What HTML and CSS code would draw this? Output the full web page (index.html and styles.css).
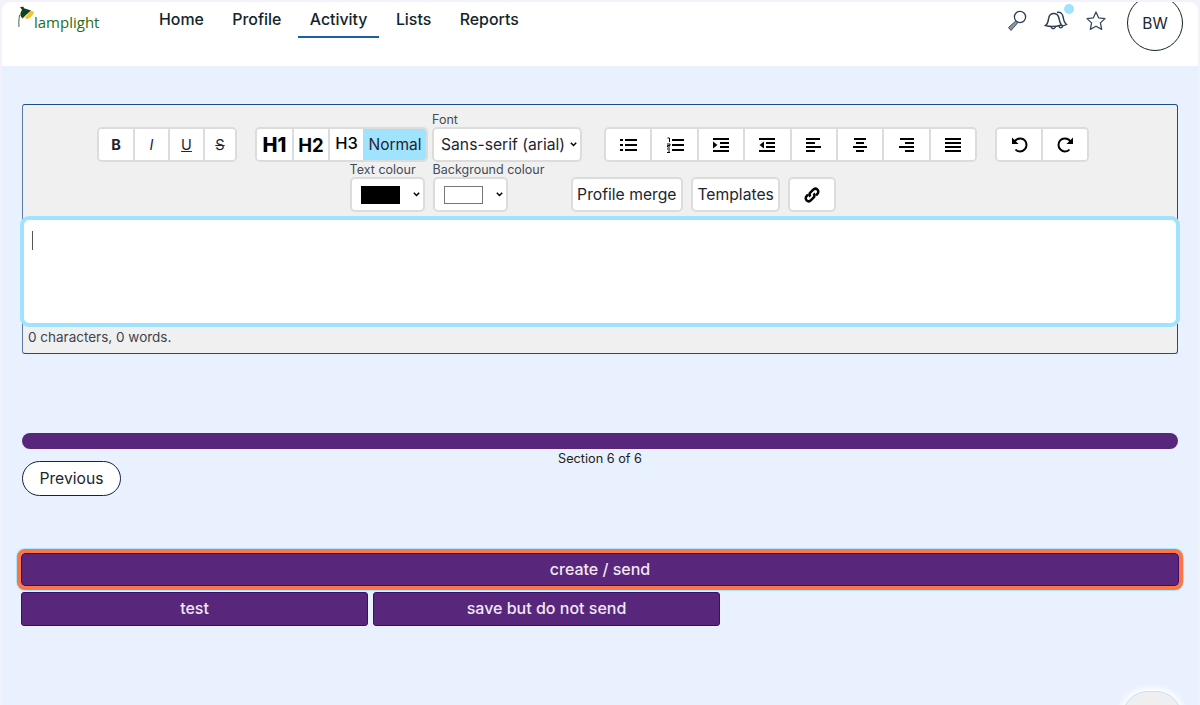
FILE: index.html
```html
<!DOCTYPE html>
<html lang="en">
<head>
<meta charset="utf-8">
<title>Lamplight</title>
<link rel="stylesheet" href="styles.css">
</head>
<body>
<div class="page">
  <header class="header">
    <a class="logo" href="#">
      <svg class="lamp" width="18" height="24" viewBox="0 0 18 24">
        <path d="M2.600 10 C1.800 14 1.700 18 2 22" fill="none" stroke="#4d6a48" stroke-width="1"/>
        <path d="M3 2 L6.500 1.800 L7 3.200 L14 5.500 L9 10 L5.500 13.500 C4 12 3 10.500 3.500 8 L5 4.800 Z" fill="#14401c"/>
        <path d="M14 5.500 L17 6.800 C16.500 10 13.500 13 10.500 14 L7.500 13 L11 9 Z" fill="#f5c22e"/>
      </svg>
      <span class="logo-text">lamplight</span>
    </a>
    <nav class="nav">
      <a class="nav-link" href="#">Home</a>
      <a class="nav-link" href="#">Profile</a>
      <a class="nav-link active" href="#">Activity</a>
      <a class="nav-link" href="#">Lists</a>
      <a class="nav-link" href="#">Reports</a>
    </nav>
    <div class="tools">
      <svg class="tool" width="22" height="22" viewBox="0 0 22 22">
        <circle cx="14" cy="7" r="5.600" fill="none" stroke="#2c3e50" stroke-width="1.300"/>
        <path d="M9.800 11 L2.500 17.500 L5 20.500 L11.500 13 Z" fill="#8a97a3" stroke="#3c4d5c" stroke-width="1"/>
      </svg>
      <span class="bell-wrap">
        <svg width="24" height="22" viewBox="0 0 24 22">
          <path d="M1.500 16.500 C4 15 4.200 12.500 4.600 9.500 C5 6.500 7 4.500 10 4.500 C12.500 4.500 14 6 14.800 8.500 C15.500 11.500 15.500 14 17.500 16 C13 17.500 6 18 1.500 16.500 Z" fill="none" stroke="#2c3e50" stroke-width="1.500"/>
          <path d="M13 3.500 C16 2.500 18.500 4.500 19 7.500 C19.500 11 20 13.500 22.500 15.500 C21 16.500 19 16.800 17.500 16.800" fill="none" stroke="#2c3e50" stroke-width="1.500"/>
          <path d="M7 17.500 C7.500 20.500 11 20.500 11.500 17.500 M15 17 C15.500 19.500 18 19.500 18.800 17" fill="none" stroke="#2c3e50" stroke-width="1.300"/>
        </svg>
        <span class="bell-dot"></span>
      </span>
      <svg class="tool star" width="22" height="22" viewBox="0 0 22 22">
        <path d="M11 2 L13.600 7.800 L20 8.600 L15.400 12.900 L16.700 19.400 L11 16.200 L5.300 19.400 L6.600 12.900 L2 8.600 L8.400 7.800 Z" fill="none" stroke="#34495e" stroke-width="1.300" stroke-linejoin="round"/>
      </svg>
      <div class="avatar">BW</div>
    </div>
  </header>

  <main class="main">
    <section class="editor">
      <div class="toolbar">
        <div class="row row-one">
          <div class="group group-fmt gap-18">
            <button class="cell fmt-b">B</button>
            <button class="cell fmt-i">I</button>
            <button class="cell fmt-u">U</button>
            <button class="cell fmt-s">S</button>
          </div>
          <div class="group gap-4">
            <button class="cell h1">H1</button>
            <button class="cell h2">H2</button>
            <button class="cell h3">H3</button>
            <button class="cell normal">Normal</button>
          </div>
          <div class="field gap-22">
            <label class="label">Font</label>
            <select class="select select-font"><option>Sans-serif (arial)</option></select>
          </div>
          <div class="group group-list gap-18">
            <button class="cell"><svg width="18" height="16" viewBox="0 0 18 16"><path d="M6 3h12M6 8h12M6 13h12" stroke="#000" stroke-width="2"/><path d="M1 2h3v2H1zM1 7h3v2H1zM1 12h3v2H1z" fill="#000"/></svg></button>
            <button class="cell"><svg width="18" height="16" viewBox="0 0 18 16"><path d="M6 3h12M6 8h12M6 13h12" stroke="#000" stroke-width="2"/><path d="M1.500 1h2v4M1 7h3v1.500H1.500V10H4M1 12h3M2 14h2M1 15.500h3" fill="none" stroke="#000" stroke-width="1"/></svg></button>
            <button class="cell"><svg width="16" height="16" viewBox="0 0 16 16"><path d="M0 2h16M7 6h9M7 10h9M0 14h16" stroke="#000" stroke-width="2"/><path d="M0 4.500L4.500 8L0 11.500Z" fill="#000"/></svg></button>
            <button class="cell"><svg width="16" height="16" viewBox="0 0 16 16"><path d="M0 2h16M7 6h9M7 10h9M0 14h16" stroke="#000" stroke-width="2"/><path d="M5 4.500L0.500 8L5 11.500Z" fill="#000"/></svg></button>
            <button class="cell"><svg width="16" height="16" viewBox="0 0 16 16"><path d="M0 2h14M0 6h9M0 10h15M0 14h9" stroke="#000" stroke-width="1.800"/></svg></button>
            <button class="cell"><svg width="16" height="16" viewBox="0 0 16 16"><path d="M2 2h12M4 6h8M1 10h14M4 14h8" stroke="#000" stroke-width="1.800"/></svg></button>
            <button class="cell"><svg width="16" height="16" viewBox="0 0 16 16"><path d="M2 2h14M7 6h9M1 10h15M7 14h9" stroke="#000" stroke-width="1.800"/></svg></button>
            <button class="cell"><svg width="16" height="16" viewBox="0 0 16 16"><path d="M0 2h16M0 6h16M0 10h16M0 14h16" stroke="#000" stroke-width="1.800"/></svg></button>
          </div>
          <div class="group group-undo gap-14">
            <button class="cell"><svg width="17" height="17" viewBox="0 0 17 17"><path d="M3 7 C4 3.500 7 2.500 9.500 2.500 C13 2.500 15.500 5.500 15.500 9 C15.500 12.500 12.500 15.500 9 15.500 C7 15.500 5.500 14.800 4.500 13.500" fill="none" stroke="#000" stroke-width="2"/><path d="M1 1.500V8H7.500Z" fill="#000"/></svg></button>
            <button class="cell"><svg width="17" height="17" viewBox="0 0 17 17"><path d="M14 7 C13 3.500 10 2.500 7.500 2.500 C4 2.500 1.500 5.500 1.500 9 C1.500 12.500 4.500 15.500 8 15.500 C10 15.500 11.500 14.800 12.500 13.500" fill="none" stroke="#000" stroke-width="2"/><path d="M16 1.500V8H9.500Z" fill="#000"/></svg></button>
          </div>
        </div>
        <div class="row row-two">
          <div class="field field-colour gap-8">
            <label class="label">Text colour</label>
            <div class="swatch-select">
              <select class="select select-colour"><option></option></select>
              <span class="swatch swatch-black"></span>
            </div>
          </div>
          <div class="field field-colour gap-63">
            <label class="label">Background colour</label>
            <div class="swatch-select">
              <select class="select select-colour"><option></option></select>
              <span class="swatch swatch-white"></span>
            </div>
          </div>
          <button class="plain gap-8">Profile merge</button>
          <button class="plain gap-8">Templates</button>
          <button class="plain plain-link gap-14">
            <svg width="18" height="18" viewBox="0 0 18 18"><g fill="none" stroke="#000" stroke-width="2.500"><path d="M7.500 10.500 C6 9 6.300 7.500 7.500 6.300 L10 3.800 C11.300 2.500 13.200 2.500 14.400 3.700 C15.600 4.900 15.600 6.800 14.300 8 L13 9.300"/><path d="M10.500 7.500 C12 9 11.700 10.500 10.500 11.700 L8 14.200 C6.700 15.500 4.800 15.500 3.600 14.300 C2.400 13.100 2.400 11.200 3.700 10 L5 8.700"/></g></svg>
          </button>
        </div>
      </div>
      <div class="textarea" role="textbox"><span class="caret"></span></div>
      <div class="status">0 characters, 0 words.</div>
    </section>

    <div class="progress"></div>
    <div class="progress-label">Section 6 of 6</div>
    <button class="previous">Previous</button>

    <button class="action action-primary">create / send</button>
    <div class="action-row">
      <button class="action action-half">test</button>
      <button class="action action-half">save but do not send</button>
    </div>
  </main>
  <div class="chat-tab"></div>
</div>
</body>
</html>
```

FILE: styles.css
```css
* { box-sizing: border-box; }
html, body { margin: 0; height: 100%; overflow: hidden; }
body {
  background: #f1f2fa;
  font-family: Inter, "Noto Sans", sans-serif;
  color: #1c2530;
}
button, select { font-family: inherit; color: inherit; }
a { text-decoration: none; color: inherit; }

.page {
  position: relative;
  height: 703px;
  margin: 2px 2px 0;
  background: #e9f0fe;
  border-radius: 8px 8px 0 0;
  overflow: hidden;
}

/* Header */
.header {
  display: flex;
  height: 64px;
  background: #fff;
  overflow: hidden;
  border-radius: 8px 8px 0 0;
  padding-left: 15px;
}
.logo { display: flex; align-items: flex-start; width: 130px; padding-top: 3px; }
.lamp { flex: none; }
.logo-text {
  margin: 7px 0 0 -1px;
  font-family: "Open Sans", sans-serif;
  font-size: 15px;
  font-weight: 500;
  line-height: 20px;
  color: #1f7019;
}
.nav { display: flex; gap: 4.400px; align-items: flex-start; }
.nav-link {
  height: 36px;
  padding: 7px 12px 0;
  font-size: 15.900px;
  font-weight: 500;
  line-height: 21px;
  color: #12262a;
}
.nav-link.active { border-bottom: 2.500px solid #1a609e; }
.tools { display: flex; align-items: flex-start; margin-left: auto; padding-right: 15px; }
.tool { margin-top: 8px; }
.bell-wrap { position: relative; display: block; margin: 7px 0 0 16px; height: 22px; }
.bell-dot {
  position: absolute;
  top: -5px;
  right: -6px;
  width: 10px;
  height: 10px;
  border-radius: 50%;
  background: #a0e3ff;
}
.star { margin-left: 17px; }
.avatar {
  display: flex;
  align-items: center;
  justify-content: center;
  width: 56px;
  height: 56px;
  margin: -7px 0 0 20px;
  border: 1.800px solid #12281a;
  border-radius: 50%;
  font-size: 15.500px;
}

/* Editor */
.main { padding: 38px 20px 0; }
.editor {
  height: 250px;
  background: #f0f0f0;
  border: 1px solid #1a4f86;
  border-left-color: #5a7ba8;
  border-radius: 3px;
}
.toolbar { padding: 8px 0 5px; }
.row { display: flex; justify-content: center; align-items: flex-end; }
.row-one { height: 49px; }
.row-two { height: 50px; }
.gap-4 { margin-right: 4px; }
.gap-8 { margin-right: 8px; }
.gap-14 { margin-right: 14px; }
.gap-18 { margin-right: 18px; }
.gap-22 { margin-right: 22px; }
.gap-63 { margin-right: 63px; }

.group {
  display: flex;
  height: 35px;
  background: #fff;
  border: 2px solid #dcdcdc;
  border-radius: 5px;
}
.cell {
  display: flex;
  align-items: center;
  justify-content: center;
  height: 31px;
  padding: 0;
  background: #fff;
  border: 0;
  border-left: 2px solid #dcdcdc;
  font-size: 15.500px;
}
.cell:first-child { border-left: 0; border-radius: 3px 0 0 3px; }
.cell:last-child { border-radius: 0 3px 3px 0; }
.group-fmt { width: 140px; }
.group-fmt .cell { font-size: 14.500px; }
.fmt-b { width: 34px; font-weight: 700; }
.fmt-i { width: 35px; font-style: italic; }
.fmt-u { width: 35px; text-decoration: underline; }
.fmt-s { width: 32px; text-decoration: line-through; }
.h1 { width: 35px; font-size: 20px; font-weight: 800; color: #000; }
.h2 { width: 36px; font-size: 18.500px; font-weight: 700; color: #000; }
.h3 { width: 35px; padding-bottom: 3px; font-size: 16.500px; font-weight: 500; color: #000; }
.normal { width: 63px; padding-left: 1px; background: #a0e3ff; border-left: 0; }
.group-list { width: 373px; }
.group-list .cell { flex: 1 1 0; }
.group-undo { width: 94px; }
.group-undo .cell { flex: 1 1 0; }

.field { display: flex; flex-direction: column; }
.field-colour { width: 75px; }
.label { height: 14px; font-size: 12.500px; line-height: 14px; color: #444c55; white-space: nowrap; }
.select {
  appearance: none;
  height: 35px;
  background: #fff url("data:image/svg+xml,%3Csvg xmlns='http://www.w3.org/2000/svg' width='7' height='5' viewBox='0 0 7 5'%3E%3Cpath d='M.8.8l2.700 2.700L6.200.8' fill='none' stroke='%23000' stroke-width='1.500'/%3E%3C/svg%3E") no-repeat right 3px center;
  border: 2px solid #dcdcdc;
  border-radius: 5px;
  font-size: 15.700px;
}
.select-font { width: 150px; padding-left: 7px; }
.select-colour { width: 75px; display: block; }
.swatch-select { position: relative; }
.swatch {
  position: absolute;
  top: 9px;
  left: 11px;
  width: 39px;
  height: 18px;
}
.swatch-black { background: #000; }
.swatch-white { background: #fff; border: 1px solid #767676; }

.plain {
  height: 35px;
  padding: 0 4.500px;
  background: #fff;
  border: 2px solid #dcdcdc;
  border-radius: 5px;
  font-size: 15.700px;
}
.plain-link { display: flex; align-items: center; justify-content: center; width: 48px; }

.textarea {
  height: 103px;
  margin: 3px 1px 0 1px;
  padding: 11px 8px;
  background: #fff;
  outline: 4px solid #a0e3ff;
  border-radius: 5px;
}
.caret { display: block; width: 1px; height: 19px; background: #555; }
.status {
  padding: 5px 5px 0;
  font-size: 13.500px;
  line-height: 18px;
  color: #3b4550;
}

/* Progress */
.progress {
  height: 16px;
  margin-top: 79px;
  background: #58267a;
  border-radius: 8px;
}
.progress-label {
  height: 12px;
  font-size: 12.700px;
  line-height: 20px;
  text-align: center;
  color: #222;
}
.previous {
  display: block;
  width: 99px;
  height: 35px;
  background: #fff;
  border: 1.500px solid #16233a;
  border-radius: 18px;
  font-size: 15.700px;
}

/* Actions */
.action {
  padding: 0 0 2px;
  background: #58267a;
  border: 1px solid #3c0e66;
  border-radius: 3px;
  color: #f1e8f6;
  font-size: 16px;
  font-weight: 500;
}
.action-primary {
  display: block;
  width: 1158px;
  height: 33px;
  margin: 57px 0 0 -1px;
  outline: 4px solid #ff7444;
  box-shadow: 0 0 0 5px #a8e6ff;
  border-radius: 4px;
}
.action-row { display: flex; gap: 5px; margin: 6px 0 0 -1px; }
.action-half { width: 347px; height: 34px; }

.chat-tab {
  position: absolute;
  right: 16px;
  top: 689px;
  width: 60px;
  height: 40px;
  background: #efefef;
  border: 1px solid #b9e6f7;
  border-radius: 26px 26px 0 0;
  box-shadow: 0 0 6px 3px #fff;
}
```
